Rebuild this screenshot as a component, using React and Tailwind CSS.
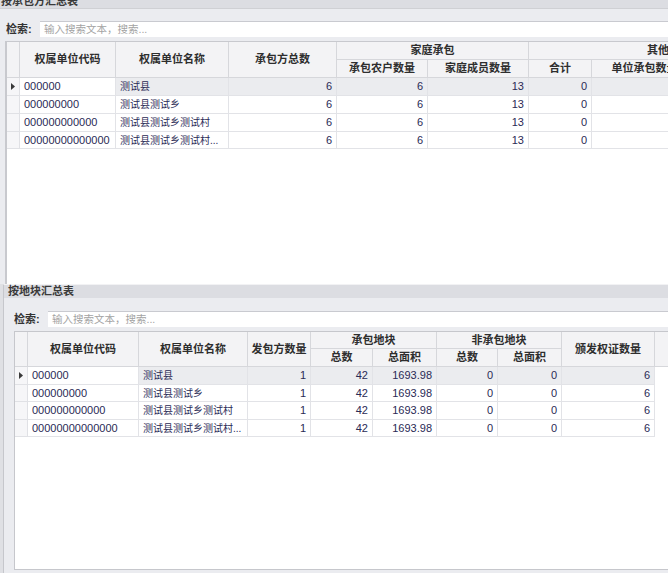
import React from "react";

const FONT = "font-['Liberation_Sans','Noto_Sans_CJK_SC',sans-serif]";

// column tracks for the two summary grids (first track = row indicator)
const TOP_COLS = "grid-cols-[13px_96px_113px_108px_91px_101px_63px_106px_112px]";
const BOTTOM_COLS = "grid-cols-[13px_111px_109px_63px_62px_64px_61px_64px_93px_40px]";

function H({ className = "", children }) {
  return (
    <div
      className={
        "flex items-center justify-center overflow-hidden whitespace-nowrap border-r border-b border-[#d6d7db] bg-[#f3f3f5] text-[11px] font-bold text-[#2e2e2e] " +
        className
      }
    >
      {children}
    </div>
  );
}

function Indicator({ active }) {
  return (
    <div className="flex items-center justify-center border-r border-b border-[#e0e1e5] bg-[#f6f6f8]">
      {active && (
        <svg width="4" height="7" viewBox="0 0 4 7">
          <path d="M0 0 L4 3.5 L0 7 Z" fill="#3a3a3a" />
        </svg>
      )}
    </div>
  );
}

function Cell({ children, right, name, bg }) {
  return (
    <div
      className={
        "flex items-center overflow-hidden whitespace-nowrap border-r border-b border-[#e2e3e7] px-[4px] text-[#2a2a55] " +
        (right ? "justify-end " : "justify-start ") +
        (name ? "text-[10px] " : "text-[11px] ") +
        (bg ? "bg-[#ebecef]" : "bg-white")
      }
    >
      {children}
    </div>
  );
}

function SearchRow({ pad }) {
  return (
    <div className={"flex h-[16px] items-center " + pad}>
      <div className="w-[34px] text-[11px] font-bold text-[#333]">检索:</div>
      <div className="flex h-[16px] flex-1 items-center border-t border-[#c9cad0] bg-white pl-[4px] text-[10.5px] text-[#a3a3a3]">
        输入搜索文本，搜索...
      </div>
    </div>
  );
}

const names = ["测试县", "测试县测试乡", "测试县测试乡测试村", "测试县测试乡测试村..."];
const codes = ["000000", "000000000", "000000000000", "00000000000000"];
const topHeights = ["h-[18px]", "h-[18px]", "h-[18px]", "h-[17px]"];
const bottomHeights = ["h-[18px]", "h-[17px]", "h-[18px]", "h-[17px]"];

function TopGrid() {
  return (
    <div className="ml-[5px] mt-[4px] flex-1 overflow-hidden border-l-2 border-t border-[#c8c9ce] bg-white">
      <div className={"grid w-[803px] grid-rows-[18px_18px] " + TOP_COLS}>
        <H className="row-span-2" />
        <H className="row-span-2">权属单位代码</H>
        <H className="row-span-2">权属单位名称</H>
        <H className="row-span-2">承包方总数</H>
        <H className="col-span-2">家庭承包</H>
        <H className="col-span-3">其他承包</H>
        <H>承包农户数量</H>
        <H>家庭成员数量</H>
        <H>合计</H>
        <H>单位承包数量</H>
        <H>个人承包数量</H>
      </div>
      {codes.map((code, i) => {
        const sel = i === 0;
        return (
          <div key={code} className={"grid w-[803px] " + TOP_COLS + " " + topHeights[i]}>
            <Indicator active={sel} />
            <Cell>{code}</Cell>
            <Cell name bg={sel}>{names[i]}</Cell>
            <Cell right bg={sel}>6</Cell>
            <Cell right bg={sel}>6</Cell>
            <Cell right bg={sel}>13</Cell>
            <Cell right bg={sel}>0</Cell>
            <Cell right bg={sel}>0</Cell>
            <Cell right bg={sel}>0</Cell>
          </div>
        );
      })}
    </div>
  );
}

function BottomGrid() {
  return (
    <div className="ml-[10px] mt-[4px] flex-1 overflow-hidden border-l border-t border-b border-[#c6c7cc] bg-white">
      <div className={"grid w-[700px] grid-rows-[17px_18px] " + BOTTOM_COLS}>
        <H className="row-span-2" />
        <H className="row-span-2">权属单位代码</H>
        <H className="row-span-2">权属单位名称</H>
        <H className="row-span-2">发包方数量</H>
        <H className="col-span-2">承包地块</H>
        <H className="col-span-2">非承包地块</H>
        <H className="row-span-2">颁发权证数量</H>
        <H className="row-span-2" />
        <H>总数</H>
        <H>总面积</H>
        <H>总数</H>
        <H>总面积</H>
      </div>
      {codes.map((code, i) => {
        const sel = i === 0;
        return (
          <div key={code} className={"grid w-[700px] " + BOTTOM_COLS + " " + bottomHeights[i]}>
            <Indicator active={sel} />
            <Cell>{code}</Cell>
            <Cell name bg={sel}>{names[i]}</Cell>
            <Cell right bg={sel}>1</Cell>
            <Cell right bg={sel}>42</Cell>
            <Cell right bg={sel}>1693.98</Cell>
            <Cell right bg={sel}>0</Cell>
            <Cell right bg={sel}>0</Cell>
            <Cell right bg={sel}>6</Cell>
            <div className="bg-white" />
          </div>
        );
      })}
    </div>
  );
}

export default function App() {
  return (
    <div className={"flex h-[573px] w-[668px] flex-col overflow-hidden bg-[#dfe0e4] " + FONT}>
      {/* contractor summary */}
      <div className="flex h-[284px] flex-col">
        <div className="flex h-[9px] flex-col justify-end overflow-hidden border-b border-[#cfd0d4] bg-[#dcdde2] pl-[1px]">
          <div className="shrink-0 text-[11px] font-semibold leading-[13px] text-[#3a3a3a]">按承包方汇总表</div>
        </div>
        <div className="flex flex-1 flex-col bg-[#ebecf0] pt-[12px]">
          <SearchRow pad="pl-[6px]" />
          <TopGrid />
        </div>
      </div>

      {/* land parcel summary */}
      <div className="ml-[3px] flex flex-1 flex-col border-l border-t border-l-[#c6c7cc] border-t-[#f2f2f4]">
        <div className="flex h-[13px] items-center bg-[#dcdde2] pl-[4px] text-[11px] font-semibold leading-[13px] text-[#3a3a3a]">
          按地块汇总表
        </div>
        <div className="flex flex-1 flex-col bg-[#ebecf0] pt-[13px] pb-[3px]">
          <SearchRow pad="pl-[10px]" />
          <BottomGrid />
        </div>
      </div>
    </div>
  );
}
